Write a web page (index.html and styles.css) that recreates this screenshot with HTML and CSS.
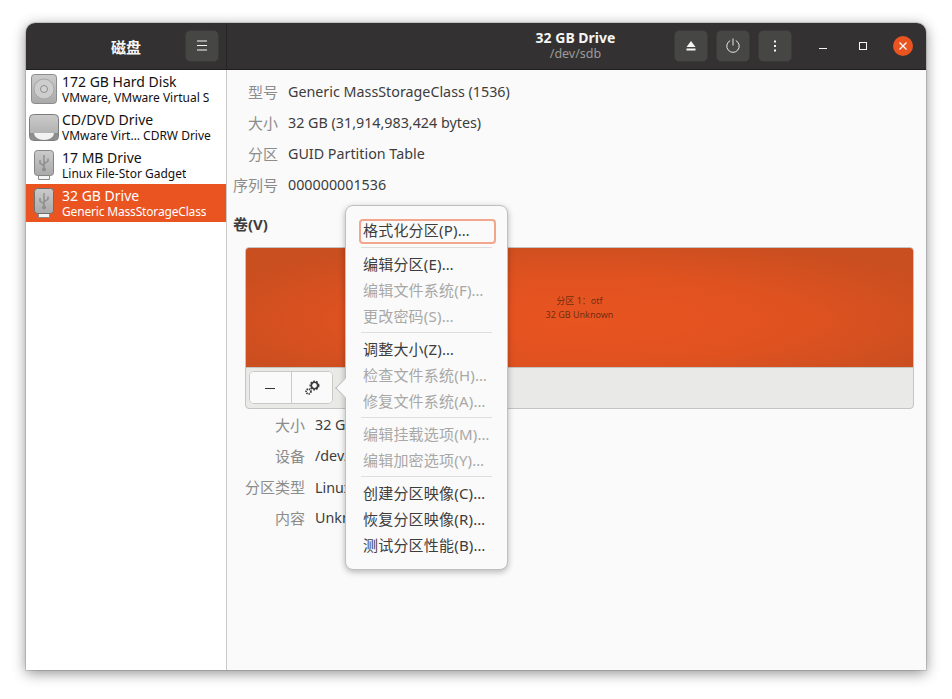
FILE: index.html
```html
<!DOCTYPE html>
<html lang="zh-CN">
<head>
  <meta charset="UTF-8">
  <meta name="viewport" content="width=device-width, initial-scale=1">
  <title>磁盘</title>
  <link rel="stylesheet" href="styles.css">
</head>
<body>

<div class="window">

  <!-- Title bar -->
  <header class="titlebar">
    <div class="bar-left">
      <span class="app-title">磁盘</span>
      <button class="hbtn menu-btn" aria-label="menu">
        <svg width="16" height="16" viewBox="0 0 16 16"><path d="M3 3.500h10M3 8h10M3 12.500h10" stroke="#f6f6f6" stroke-width="1" fill="none" transform="translate(0 -.5)"/></svg>
      </button>
    </div>
    <div class="bar-right">
      <div class="drive-title">
        <strong>32 GB Drive</strong>
        <span>/dev/sdb</span>
      </div>
      <div class="actions">
        <button class="hbtn" aria-label="eject">
          <svg width="16" height="16" viewBox="0 0 16 16"><path d="M8 3l4.500 6h-9z M3.500 10.500h9v2h-9z" fill="#f6f6f6"/></svg>
        </button>
        <button class="hbtn" aria-label="power">
          <svg width="16" height="16" viewBox="0 0 16 16"><path d="M5.200 2.600a6.200 6.200 0 1 0 5.600 0M8 .5v7" stroke="#e6e6e6" stroke-width="1" fill="none"/></svg>
        </button>
        <button class="hbtn" aria-label="more">
          <svg width="16" height="16" viewBox="0 0 16 16"><path d="M7 2.500h2v2H7zM7 7h2v2H7zM7 11.500h2v2H7z" fill="#f6f6f6"/></svg>
        </button>
      </div>
      <div class="win-controls">
        <span class="win-btn"><svg width="16" height="16" viewBox="0 0 16 16"><path d="M4 10.500h8" stroke="#f6f6f6" stroke-width="1" fill="none"/></svg></span>
        <span class="win-btn"><svg width="16" height="16" viewBox="0 0 16 16"><rect x="4.500" y="4.500" width="7" height="7" stroke="#f6f6f6" stroke-width="1" fill="none"/></svg></span>
        <span class="win-btn"><span class="close-btn">
          <svg width="20" height="20" viewBox="0 0 20 20"><path d="M6.500 6.500l7 7M13.500 6.500l-7 7" stroke="#fff" stroke-width="1.300" fill="none"/></svg>
        </span></span>
      </div>
    </div>
  </header>

  <div class="panes">

    <!-- Drive list -->
    <aside class="sidebar">
      <div class="drive">
        <svg class="drive-icon" width="32" height="32" viewBox="0 0 32 32">
          <defs>
            <linearGradient id="greyBody" x1="0" y1="0" x2="0" y2="1">
              <stop offset="0" stop-color="#cbcbcb"/>
              <stop offset="1" stop-color="#a9a9a9"/>
            </linearGradient>
          </defs>
          <rect x="3.500" y="1.500" width="25" height="29" rx="3" fill="url(#greyBody)" stroke="#8c8c8c"/>
          <circle cx="16" cy="16" r="10" fill="#cdcdcd" stroke="#a6a6a6"/>
          <circle cx="16" cy="16" r="3.500" fill="#d2d2d2" stroke="#8e8e8e"/>
        </svg>
        <div class="drive-text">
          <div class="drive-name">172 GB Hard Disk</div>
          <div class="drive-sub">VMware, VMware Virtual S</div>
        </div>
      </div>
      <div class="drive">
        <svg class="drive-icon" width="32" height="32" viewBox="0 0 32 32">
          <rect x="1.500" y="3.500" width="29" height="26" rx="4" fill="url(#greyBody)" stroke="#7d7d7d"/>
          <path d="M2 22h28v3a4 4 0 0 1-4 4H6a4 4 0 0 1-4-4z" fill="#8d8d8d"/>
          <path d="M6 22h20a10 7 0 0 1-20 0z" fill="#f2f2f2"/>
        </svg>
        <div class="drive-text">
          <div class="drive-name">CD/DVD Drive</div>
          <div class="drive-sub">VMware Virt… CDRW Drive</div>
        </div>
      </div>
      <div class="drive">
        <svg class="drive-icon" width="32" height="32" viewBox="0 0 32 32">
          <path d="M10.500 26h11v4.500h-11z" fill="#f4f4f4" stroke="#8a8a8a"/>
          <rect x="6.500" y="1.500" width="19" height="25" rx="3" fill="url(#greyBody)" stroke="#858585"/>
          <path d="M16 6v14M16 17l-4-3v-3M16 15l4-3V9.500" stroke="#8f8f8f" stroke-width="1.500" fill="none"/>
          <circle cx="16" cy="20.500" r="2" fill="#8f8f8f"/>
        </svg>
        <div class="drive-text">
          <div class="drive-name">17 MB Drive</div>
          <div class="drive-sub">Linux File-Stor Gadget</div>
        </div>
      </div>
      <div class="drive selected">
        <svg class="drive-icon" width="32" height="32" viewBox="0 0 32 32">
          <path d="M10.500 26h11v4.500h-11z" fill="#f4f4f4" stroke="#8a8a8a"/>
          <rect x="6.500" y="1.500" width="19" height="25" rx="3" fill="url(#greyBody)" stroke="#6e6e6e"/>
          <path d="M16 6v14M16 17l-4-3v-3M16 15l4-3V9.500" stroke="#8f8f8f" stroke-width="1.500" fill="none"/>
          <circle cx="16" cy="20.500" r="2" fill="#8f8f8f"/>
        </svg>
        <div class="drive-text">
          <div class="drive-name">32 GB Drive</div>
          <div class="drive-sub narrow">Generic MassStorageClass</div>
        </div>
      </div>
    </aside>

    <!-- Drive details -->
    <main class="content">
      <div class="info info-drive">
        <span class="key">型号</span><span class="val">Generic MassStorageClass (1536)</span>
        <span class="key">大小</span><span class="val">32 GB (31,914,983,424 bytes)</span>
        <span class="key">分区</span><span class="val">GUID Partition Table</span>
        <span class="key">序列号</span><span class="val">000000001536</span>
      </div>

      <h2 class="volumes-title">卷(V)</h2>

      <div class="volume-box">
        <div class="partition">
          <span>分区 1：otf</span>
          <span>32 GB Unknown</span>
        </div>
        <div class="volume-toolbar">
          <div class="btn-group">
            <button class="tool-btn" aria-label="remove">
              <svg width="16" height="16" viewBox="0 0 16 16"><path d="M3 8.500h10" stroke="#333" stroke-width="1" fill="none"/></svg>
            </button>
            <button class="tool-btn" aria-label="settings">
              <svg width="18" height="18" viewBox="0 0 18 18">
                <circle cx="11.500" cy="6.500" r="3.800" fill="none" stroke="#3d3d3d" stroke-width="2.400" stroke-dasharray="1.600 1.100"/>
                <circle cx="11.500" cy="6.500" r="3.200" fill="none" stroke="#3d3d3d" stroke-width="1.600"/>
                <circle cx="5.500" cy="12.500" r="2.400" fill="none" stroke="#3d3d3d" stroke-width="1.800" stroke-dasharray="1.300 .8"/>
              </svg>
            </button>
          </div>
        </div>
      </div>

      <div class="info info-volume">
        <span class="key">大小</span><span class="val">32 GB (31,914,983,424 bytes)</span>
        <span class="key">设备</span><span class="val">/dev/sdb1</span>
        <span class="key">分区类型</span><span class="val">Linux 文件系统</span>
        <span class="key">内容</span><span class="val">Unknown (otf)</span>
      </div>

      <!-- Partition menu -->
      <div class="popover">
        <span class="popover-arrow"></span>
        <div class="menu-item focused">格式化分区(P)…</div>
        <div class="menu-sep"></div>
        <div class="menu-item">编辑分区(E)…</div>
        <div class="menu-item off">编辑文件系统(F)…</div>
        <div class="menu-item off">更改密码(S)…</div>
        <div class="menu-sep"></div>
        <div class="menu-item">调整大小(Z)…</div>
        <div class="menu-item off">检查文件系统(H)…</div>
        <div class="menu-item off">修复文件系统(A)…</div>
        <div class="menu-sep"></div>
        <div class="menu-item off">编辑挂载选项(M)…</div>
        <div class="menu-item off">编辑加密选项(Y)…</div>
        <div class="menu-sep"></div>
        <div class="menu-item">创建分区映像(C)…</div>
        <div class="menu-item">恢复分区映像(R)…</div>
        <div class="menu-item">测试分区性能(B)…</div>
      </div>
    </main>
  </div>
</div>

</body>
</html>
```

FILE: styles.css
```css
* {
  box-sizing: border-box;
}
html, body {
  height: 100%;
}
body {
  margin: 0;
  padding: 23px 26px 29px;
  background: #fff;
  overflow: hidden;
  font-family: "Noto Sans", "Noto Sans CJK SC", sans-serif;
  font-size: 14px;
  color: #3d3d3d;
}
button {
  font: inherit;
  cursor: pointer;
}
.window {
  display: flex;
  flex-direction: column;
  height: 100%;
  border-radius: 9px 9px 0 0;
  overflow: hidden;
  background: #fafafa;
  box-shadow: 0 3px 14px rgba(0,0,0,0.45), 0 0 0 1px rgba(0,0,0,0.12);
}

/* Title bar */
.titlebar {
  display: flex;
  flex: none;
  height: 47px;
  background: #333131;
  color: #f5f5f5;
  border-bottom: 1px solid #1f1f1f;
}
.bar-left {
  display: flex;
  align-items: center;
  width: 201px;
  flex: none;
  padding-left: 85px;
  border-right: 1px solid #252525;
}
.app-title {
  font-weight: bold;
  font-size: 15px;
  width: 74px;
}
.bar-right {
  display: flex;
  flex: 1;
  align-items: center;
}
.hbtn {
  display: flex;
  align-items: center;
  justify-content: center;
  width: 34px;
  height: 32px;
  padding: 0;
  background: #464644;
  border: 1px solid #3a3a38;
  border-radius: 5px;
}
.drive-title {
  display: flex;
  flex-direction: column;
  align-items: center;
  width: 447px;
  padding-left: 250px;
  line-height: 16px;
  white-space: nowrap;
}
.drive-title strong {
  font-size: 14px;
}
.drive-title span {
  color: #9b9b98;
  font-size: 12.500px;
}
.actions {
  display: flex;
  gap: 8px;
}
.win-controls {
  display: flex;
  align-items: center;
  margin-left: 11px;
}
.win-btn {
  display: flex;
  align-items: center;
  justify-content: center;
  width: 40px;
}
.close-btn {
  display: flex;
  align-items: center;
  justify-content: center;
  width: 20px;
  height: 20px;
  border-radius: 50%;
  background: #e95420;
}

/* Panes */
.panes {
  display: flex;
  flex: 1;
  min-height: 0;
}
.sidebar {
  width: 201px;
  flex: none;
  background: #fff;
  border-right: 1px solid #c9c9c6;
}
.drive {
  display: flex;
  align-items: center;
  height: 38px;
  padding-left: 2px;
  color: #111;
}
.drive.selected {
  background: #e95420;
  color: #fff;
}
.drive-icon {
  flex: none;
  margin-right: 2px;
}
.drive-text {
  white-space: nowrap;
  overflow: hidden;
}
.drive-name {
  font-size: 14px;
  line-height: 17px;
}
.drive-sub {
  font-size: 12px;
  line-height: 15px;
}
.drive-sub.narrow {
  letter-spacing: -0.17px;
}

/* Details */
.content {
  position: relative;
  flex: 1;
  padding: 6px 12px 0 18px;
  background: #fafafa;
  min-width: 0;
}
.info {
  display: grid;
  column-gap: 10px;
  grid-auto-rows: 31px;
  align-items: center;
  white-space: nowrap;
}
.info-drive {
  grid-template-columns: 45px 1fr;
  margin-left: -12px;
}
.info-volume {
  grid-template-columns: 60px 1fr;
}
.key {
  text-align: right;
  font-size: 15px;
  color: #8c8c8a;
}
.val {
  color: #3d3d3d;
  font-size: 14.300px;
}
.volumes-title {
  margin: 14px 0 0 -12px;
  font-size: 15px;
  line-height: 20px;
  font-weight: bold;
  color: #3d3d3d;
}
.volume-box {
  margin-top: 13px;
  height: 162px;
  border: 1px solid #c4c4c2;
  border-radius: 4px;
  overflow: hidden;
  background: #e9e9e7;
}
.partition {
  display: flex;
  flex-direction: column;
  align-items: center;
  justify-content: center;
  height: 120px;
  background: radial-gradient(ellipse 60% 70% at 50% 60%, #e95420 0%, #df5220 55%, #c94e20 100%);
  color: rgba(70,30,10,0.75);
  font-size: 9px;
  line-height: 14px;
  border-bottom: 1px solid #c4c4c2;
}
.volume-toolbar {
  padding: 3px 3px;
}
.btn-group {
  display: flex;
  width: 84px;
  height: 33px;
  border: 1px solid #c9c9c6;
  border-radius: 5px;
  overflow: hidden;
  background: #fafafa;
}
.tool-btn {
  display: flex;
  flex: 1;
  align-items: center;
  justify-content: center;
  padding: 0;
  background: #fafafa;
  border: none;
}
.tool-btn + .tool-btn {
  border-left: 1px solid #c9c9c6;
}

/* Popover */
.popover {
  position: absolute;
  left: 118px;
  top: 135px;
  width: 163px;
  height: 365px;
  padding: 13px 13px 0;
  background: #fafafa;
  border: 1px solid #c0c0bd;
  border-radius: 8px;
  box-shadow: 0 2px 6px rgba(0,0,0,0.28);
  white-space: nowrap;
}
.popover-arrow {
  position: absolute;
  left: -8px;
  top: 175px;
  width: 14px;
  height: 14px;
  background: #fafafa;
  border-left: 1px solid #c0c0bd;
  border-bottom: 1px solid #c0c0bd;
  transform: rotate(45deg);
}
.menu-item {
  height: 26px;
  line-height: 26px;
  padding-left: 4px;
  font-size: 15px;
  letter-spacing: 0.2px;
  color: #3d3d3d;
}
.menu-item.off {
  color: #a8a8a6;
}
.menu-item.focused {
  width: 137px;
  height: 25px;
  line-height: 19px;
  padding-left: 2px;
  border: 2px solid #f3a68e;
  border-radius: 4px;
}
.menu-sep {
  height: 1px;
  margin: 3px 2px;
  background: #dededc;
}
```
